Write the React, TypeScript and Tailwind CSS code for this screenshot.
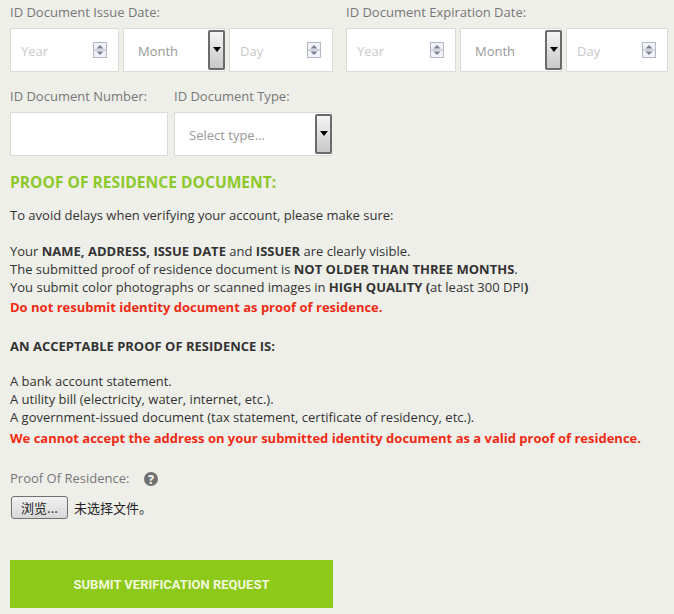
const sans = "font-['Open_Sans',sans-serif]";

function Spinner() {
  return (
    <svg width="14" height="16" viewBox="0 0 14 16" className="shrink-0">
      <rect x="0.5" y="0.5" width="13" height="15" fill="#f1f3f8" stroke="#b4b8c4" />
      <line x1="1" y1="8" x2="13" y2="8" stroke="#b4b8c4" />
      <path d="M7 3 L10.5 6.5 L3.5 6.5 Z" fill="#7b8296" />
      <path d="M7 13 L10.5 9.5 L3.5 9.5 Z" fill="#7b8296" />
    </svg>
  );
}

function SelectArrow() {
  return (
    <div className="-mr-px flex h-full w-[17px] shrink-0 items-start justify-center rounded-[2px] border-2 border-[#6b6b6b] bg-gradient-to-b from-[#f6f6f6] to-[#c8c8c8] pt-[15px]">
      <svg width="8" height="5" viewBox="0 0 8 5">
        <path d="M0 0 H8 L4 5 Z" fill="#000" />
      </svg>
    </div>
  );
}

function NumberBox({ label, className }: { label: string; className: string }) {
  return (
    <div className={`flex h-11 items-center justify-between border border-[#dcdcd6] bg-white pl-[10px] pr-[11px] ${className}`}>
      <span className="mt-1 text-[13px] text-[#c9c9c9]">{label}</span>
      <Spinner />
    </div>
  );
}

function SelectBox({ label, className }: { label: string; className: string }) {
  return (
    <div className={`flex h-11 items-center justify-between border border-[#dcdcd6] bg-white py-px pl-[14px] ${className}`}>
      <span className="mt-1 text-[13px] text-[#999]">{label}</span>
      <SelectArrow />
    </div>
  );
}

function DateGroup({ title, widths }: { title: string; widths: [string, string, string] }) {
  return (
    <div className="flex flex-col">
      <div className="h-[19px] text-[13px] leading-[19px] text-[#777]">{title}</div>
      <div className="mt-[6px] flex gap-[4px]">
        <NumberBox label="Year" className={widths[0]} />
        <SelectBox label="Month" className={widths[1]} />
        <NumberBox label="Day" className={widths[2]} />
      </div>
    </div>
  );
}

export default function App() {
  return (
    <div className={`${sans} h-[614px] w-[674px] overflow-hidden bg-[#efefea] px-[10px] pt-[3px]`}>
      <div className="flex gap-[13px]">
        <DateGroup title="ID Document Issue Date:" widths={["w-[109px]", "w-[102px]", "w-[104px]"]} />
        <DateGroup title="ID Document Expiration Date:" widths={["w-[110px]", "w-[102px]", "w-[102px]"]} />
      </div>

      <div className="mt-[15px] flex gap-[6px]">
        <div>
          <div className="h-[19px] text-[13px] leading-[19px] text-[#777]">ID Document Number:</div>
          <div className="mt-[6px] h-11 w-[158px] border border-[#dcdcd6] bg-white" />
        </div>
        <div>
          <div className="h-[19px] text-[13px] leading-[19px] text-[#777]">ID Document Type:</div>
          <SelectBox label="Select type..." className="mt-[6px] w-[158px]" />
        </div>
      </div>

      <h2 className="mt-[15px] text-[15.6px] leading-[22px] font-bold text-[#8cc92a]">PROOF OF RESIDENCE DOCUMENT:</h2>

      <div className="mt-[13px] text-[13px] leading-[18px] text-[#333]">
        <p>To avoid delays when verifying your account, please make sure:</p>
        <p className="mt-[18px]">
          Your <b>NAME, ADDRESS, ISSUE DATE</b> and <b>ISSUER</b> are clearly visible.
        </p>
        <p>
          The submitted proof of residence document is <b>NOT OLDER THAN THREE MONTHS</b>.
        </p>
        <p>
          You submit color photographs or scanned images in <b>HIGH QUALITY (</b>at least 300 DPI<b>)</b>
        </p>
        <p className="mt-[2px] font-bold text-[#f02b14]">Do not resubmit identity document as proof of residence.</p>
        <p className="mt-[21px] font-bold">AN ACCEPTABLE PROOF OF RESIDENCE IS:</p>
        <p className="mt-[17px]">A bank account statement.</p>
        <p>A utility bill (electricity, water, internet, etc.).</p>
        <p>A government-issued document (tax statement, certificate of residency, etc.).</p>
        <p className="mt-[3px] font-bold text-[#f02b14]">
          We cannot accept the address on your submitted identity document as a valid proof of residence.
        </p>
      </div>

      <div className="mt-[22px] flex h-[19px] items-center text-[13px] text-[#777]">
        <span>Proof Of Residence:</span>
        <svg width="14" height="14" viewBox="0 0 14 14" className="ml-[15px]">
          <circle cx="7" cy="7" r="7" fill="#707070" />
          <text x="7" y="11.5" textAnchor="middle" fontSize="12" fontWeight="800" fill="#efefea" fontFamily="Open Sans, sans-serif">?</text>
        </svg>
      </div>

      <div className="mt-[8px] flex items-center pl-px font-['Noto_Sans_CJK_SC',sans-serif] text-[13px] text-[#222]">
        <div className="flex h-[23px] w-[57px] items-center justify-center rounded-[3px] border border-[#707070] bg-gradient-to-b from-[#f2f2f2] to-[#d8d8d8]">
          浏览...
        </div>
        <span className="ml-[6px]">未选择文件。</span>
      </div>

      <button className="mt-[41px] flex h-12 w-[323px] items-center justify-center bg-[#8cc919] pt-[2px] font-['Roboto',sans-serif] text-[13px] font-bold text-[#f2f8dc]">
        SUBMIT VERIFICATION REQUEST
      </button>
    </div>
  );
}
